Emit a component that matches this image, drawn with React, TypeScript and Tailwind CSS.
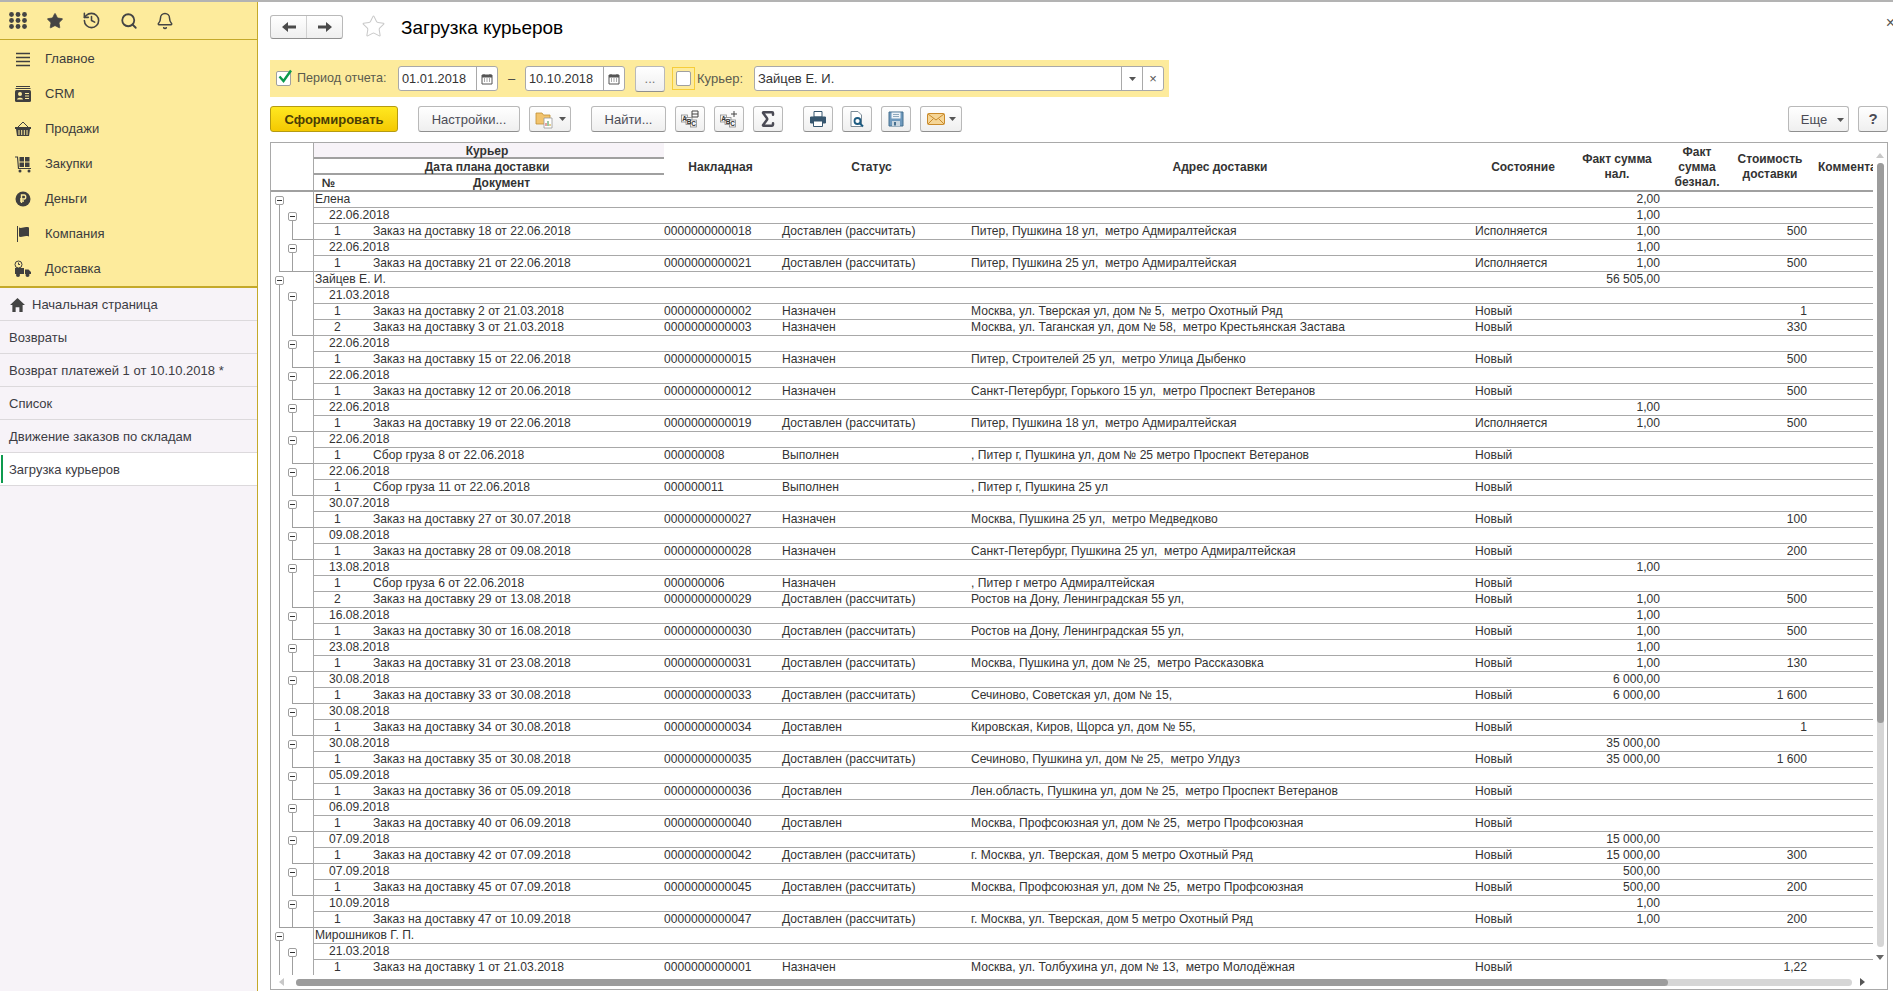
import { Bell, History, Search, Sigma, Star } from 'lucide-react'
import type { ReactNode } from 'react'

type Item = [string, string, string, string, string, string, string?, string?]
type DateGroup = { date: string; cash?: string; items: Item[] }
type Courier = { name: string; total?: string; open?: boolean; dates: DateGroup[] }

const OK = 'Доставлен (рассчитать)'
const SET = 'Назначен'
const DONE = 'Доставлен'

const couriers: Courier[] = [
  {
    name: 'Елена',
    total: '2,00',
    dates: [
      { date: '22.06.2018', cash: '1,00', items: [['1', 'Заказ на доставку 18 от 22.06.2018', '0000000000018', OK, 'Питер, Пушкина 18 ул,  метро Адмиралтейская', 'Исполняется', '1,00', '500']] },
      { date: '22.06.2018', cash: '1,00', items: [['1', 'Заказ на доставку 21 от 22.06.2018', '0000000000021', OK, 'Питер, Пушкина 25 ул,  метро Адмиралтейская', 'Исполняется', '1,00', '500']] },
    ],
  },
  {
    name: 'Зайцев Е. И.',
    total: '56 505,00',
    dates: [
      {
        date: '21.03.2018',
        items: [
          ['1', 'Заказ на доставку 2 от 21.03.2018', '0000000000002', SET, 'Москва, ул. Тверская ул, дом № 5,  метро Охотный Ряд', 'Новый', '', '1'],
          ['2', 'Заказ на доставку 3 от 21.03.2018', '0000000000003', SET, 'Москва, ул. Таганская ул, дом № 58,  метро Крестьянская Застава', 'Новый', '', '330'],
        ],
      },
      { date: '22.06.2018', items: [['1', 'Заказ на доставку 15 от 22.06.2018', '0000000000015', SET, 'Питер, Строителей 25 ул,  метро Улица Дыбенко', 'Новый', '', '500']] },
      { date: '22.06.2018', items: [['1', 'Заказ на доставку 12 от 20.06.2018', '0000000000012', SET, 'Санкт-Петербург, Горького 15 ул,  метро Проспект Ветеранов', 'Новый', '', '500']] },
      { date: '22.06.2018', cash: '1,00', items: [['1', 'Заказ на доставку 19 от 22.06.2018', '0000000000019', OK, 'Питер, Пушкина 18 ул,  метро Адмиралтейская', 'Исполняется', '1,00', '500']] },
      { date: '22.06.2018', items: [['1', 'Сбор груза 8 от 22.06.2018', '000000008', 'Выполнен', ', Питер г, Пушкина ул, дом № 25 метро Проспект Ветеранов', 'Новый']] },
      { date: '22.06.2018', items: [['1', 'Сбор груза 11 от 22.06.2018', '000000011', 'Выполнен', ', Питер г, Пушкина 25 ул', 'Новый']] },
      { date: '30.07.2018', items: [['1', 'Заказ на доставку 27 от 30.07.2018', '0000000000027', SET, 'Москва, Пушкина 25 ул,  метро Медведково', 'Новый', '', '100']] },
      { date: '09.08.2018', items: [['1', 'Заказ на доставку 28 от 09.08.2018', '0000000000028', SET, 'Санкт-Петербург, Пушкина 25 ул,  метро Адмиралтейская', 'Новый', '', '200']] },
      {
        date: '13.08.2018',
        cash: '1,00',
        items: [
          ['1', 'Сбор груза 6 от 22.06.2018', '000000006', SET, ', Питер г метро Адмиралтейская', 'Новый'],
          ['2', 'Заказ на доставку 29 от 13.08.2018', '0000000000029', OK, 'Ростов на Дону, Ленинградская 55 ул,', 'Новый', '1,00', '500'],
        ],
      },
      { date: '16.08.2018', cash: '1,00', items: [['1', 'Заказ на доставку 30 от 16.08.2018', '0000000000030', OK, 'Ростов на Дону, Ленинградская 55 ул,', 'Новый', '1,00', '500']] },
      { date: '23.08.2018', cash: '1,00', items: [['1', 'Заказ на доставку 31 от 23.08.2018', '0000000000031', OK, 'Москва, Пушкина ул, дом № 25,  метро Рассказовка', 'Новый', '1,00', '130']] },
      { date: '30.08.2018', cash: '6 000,00', items: [['1', 'Заказ на доставку 33 от 30.08.2018', '0000000000033', OK, 'Сечиново, Советская ул, дом № 15,', 'Новый', '6 000,00', '1 600']] },
      { date: '30.08.2018', items: [['1', 'Заказ на доставку 34 от 30.08.2018', '0000000000034', DONE, 'Кировская, Киров, Щорса ул, дом № 55,', 'Новый', '', '1']] },
      { date: '30.08.2018', cash: '35 000,00', items: [['1', 'Заказ на доставку 35 от 30.08.2018', '0000000000035', OK, 'Сечиново, Пушкина ул, дом № 25,  метро Улдуз', 'Новый', '35 000,00', '1 600']] },
      { date: '05.09.2018', items: [['1', 'Заказ на доставку 36 от 05.09.2018', '0000000000036', DONE, 'Лен.область, Пушкина ул, дом № 25,  метро Проспект Ветеранов', 'Новый']] },
      { date: '06.09.2018', items: [['1', 'Заказ на доставку 40 от 06.09.2018', '0000000000040', DONE, 'Москва, Профсоюзная ул, дом № 25,  метро Профсоюзная', 'Новый']] },
      { date: '07.09.2018', cash: '15 000,00', items: [['1', 'Заказ на доставку 42 от 07.09.2018', '0000000000042', OK, 'г. Москва, ул. Тверская, дом 5 метро Охотный Ряд', 'Новый', '15 000,00', '300']] },
      { date: '07.09.2018', cash: '500,00', items: [['1', 'Заказ на доставку 45 от 07.09.2018', '0000000000045', OK, 'Москва, Профсоюзная ул, дом № 25,  метро Профсоюзная', 'Новый', '500,00', '200']] },
      { date: '10.09.2018', cash: '1,00', items: [['1', 'Заказ на доставку 47 от 10.09.2018', '0000000000047', OK, 'г. Москва, ул. Тверская, дом 5 метро Охотный Ряд', 'Новый', '1,00', '200']] },
    ],
  },
  {
    name: 'Мирошников Г. П.',
    open: true,
    dates: [{ date: '21.03.2018', items: [['1', 'Заказ на доставку 1 от 21.03.2018', '0000000000001', SET, 'Москва, ул. Толбухина ул, дом № 13,  метро Молодёжная', 'Новый', '', '1,22']] }],
  },
]

const cols = 'grid grid-cols-[350px_117px_189px_504px_98px_90px_70px_76px_66px]'
const LINE = '#9f9f9f'

// дерево слева от строки отчета
function TreeCell({ kind, inDate, endDate, endCourier }: { kind: 'c' | 'd' | 'i'; inDate?: boolean; endDate?: boolean; endCourier?: boolean }) {
  const box = (x: number) => (
    <>
      <rect x={x + 0.5} y="4.5" width="8" height="8" rx="1.5" fill="#fff" stroke={LINE} />
      <path d={`M${x + 2} 8.5H${x + 7}`} stroke="#333" />
    </>
  )
  return (
    <svg width="42" height="16" className="shrink-0">
      {kind === 'c' ? <path d="M8.5 13V16" stroke={LINE} /> : <path d="M8.5 0V16" stroke={LINE} />}
      {kind === 'd' && <path d="M21.5 13V16" stroke={LINE} />}
      {kind === 'i' && inDate && <path d="M21.5 0V16" stroke={LINE} />}
      {endDate && <path d="M21 15.5H42" stroke={LINE} />}
      {endCourier && <path d="M8 15.5H42" stroke={LINE} />}
      {kind === 'c' && box(4)}
      {kind === 'd' && box(17)}
    </svg>
  )
}

function Cells({ first, inv, status, addr, state, cash, cost }: { first: ReactNode; inv?: string; status?: string; addr?: string; state?: string; cash?: string; cost?: string }) {
  return (
    <div className={`${cols} h-4 flex-1 border-b border-l border-[#a8a8a8] text-[12.1px] leading-[15px] text-[#333] whitespace-pre`}>
      <div className="overflow-hidden">{first}</div>
      <div>{inv}</div>
      <div className="pl-px">{status}</div>
      <div className="pl-px">{addr}</div>
      <div className="pl-px">{state}</div>
      <div className="pr-[2px] text-right">{cash}</div>
      <div />
      <div className="pr-[1px] text-right">{cost}</div>
      <div />
    </div>
  )
}

function Rows() {
  const rows: ReactNode[] = []
  couriers.forEach((c, ci) => {
    rows.push(
      <div key={`c${ci}`} className="flex h-4">
        <TreeCell kind="c" />
        <Cells first={<span className="pl-[1px]">{c.name}</span>} cash={c.total} />
      </div>,
    )
    c.dates.forEach((d, di) => {
      rows.push(
        <div key={`d${ci}-${di}`} className="flex h-4">
          <TreeCell kind="d" />
          <Cells first={<span className="pl-[15px]">{d.date}</span>} cash={d.cash} />
        </div>,
      )
      d.items.forEach((it, ii) => {
        const lastInDate = ii === d.items.length - 1
        const lastDate = di === c.dates.length - 1
        rows.push(
          <div key={`i${ci}-${di}-${ii}`} className="flex h-4">
            <TreeCell kind="i" inDate endDate={lastInDate && !c.open} endCourier={lastInDate && lastDate && !c.open} />
            <Cells
              first={
                <div className="flex">
                  <span className="w-[59px] pl-[20px]">{it[0]}</span>
                  <span>{it[1]}</span>
                </div>
              }
              inv={it[2]}
              status={it[3]}
              addr={it[4]}
              state={it[5]}
              cash={it[6]}
              cost={it[7]}
            />
          </div>,
        )
      })
    })
  })
  return <>{rows}</>
}

function ReportHeader() {
  const th = 'flex items-center justify-center text-center text-[12px] leading-[15px] font-bold text-[#333]'
  return (
    <div className="flex h-[49px] border-b-[2px] border-[#a0a0a0]">
      <div className="h-[47px] w-[43px] shrink-0 border-r border-[#a8a8a8]" />
      <div className={cols}>
        <div className="flex flex-col">
          <div className={`${th} h-4 border-b-[2px] border-[#a0a0a0] bg-[#f7f3f8] pr-1 pt-[2px]`}>Курьер</div>
          <div className={`${th} h-4 border-b-[2px] border-[#a0a0a0] pr-1 pt-[2px]`}>Дата плана доставки</div>
          <div className="flex h-[15px] pt-px">
            <div className={`${th} w-[29px]`}>№</div>
            <div className={`${th} flex-1 pr-1`}>Документ</div>
          </div>
        </div>
        <div className={`${th} pr-1 pt-[2px]`}>Накладная</div>
        <div className={`${th} pr-[8px] pt-[2px]`}>Статус</div>
        <div className={`${th} pr-1 pt-[2px]`}>Адрес доставки</div>
        <div className={`${th} pt-[2px]`}>Состояние</div>
        <div className={th}>
          Факт сумма
          <br />
          нал.
        </div>
        <div className={`${th} pt-[2px]`}>
          Факт
          <br />
          сумма
          <br />
          безнал.
        </div>
        <div className={th}>
          Стоимость
          <br />
          доставки
        </div>
        <div className={`${th} justify-start overflow-hidden pl-[10px] pt-[2px] whitespace-nowrap`}>Комментарий</div>
      </div>
    </div>
  )
}

function Btn({ children, className = '', primary }: { children: ReactNode; className?: string; primary?: boolean }) {
  const look = primary
    ? 'border-[#b59b12] bg-gradient-to-b from-[#ffe81f] to-[#f4c900] font-bold text-[#4a3d05]'
    : 'border-[#b9b9b9] border-b-[#8f8f8f] bg-gradient-to-b from-white to-[#efefef] text-[#4b4b55]'
  return (
    <button type="button" className={`flex h-[26px] items-center justify-center rounded-[3px] border text-[13px] ${look} ${className}`}>
      {children}
    </button>
  )
}

const Caret = () => (
  <svg width="7" height="4" viewBox="0 0 7 4" className="shrink-0">
    <path d="M0 0H7L3.5 4Z" fill="#555" />
  </svg>
)

const Calendar = () => (
  <svg width="12" height="12" viewBox="0 0 12 12" className="shrink-0">
    <path d="M1 2H11V11H1Z" fill="#fff" stroke="#555" />
    <path d="M1 2H11V4.5H1Z" fill="#555" />
    <path d="M3 1V3M9 1V3" stroke="#555" />
    <path d="M3 6H4M5.5 6H6.5M8 6H9M3 8H4M5.5 8H6.5M8 8H9" stroke="#555" />
  </svg>
)

function DateField({ value }: { value: string }) {
  return (
    <div className="flex h-[25px] w-[100px] items-center rounded-[3px] border border-[#a9a9a9] bg-white">
      <span className="flex-1 pl-[3px] pt-px text-[12.8px] text-[#333]">{value}</span>
      <span className="flex h-full w-[21px] items-center justify-center border-l border-[#a9a9a9]">
        <Calendar />
      </span>
    </div>
  )
}

const AbcIcon = ({ plus }: { plus?: boolean }) => (
  <svg width="20" height="20" viewBox="0 0 20 20">
    <g fill="#f7f7f7" stroke="#8a8a8a" strokeWidth="0.8">
      <rect x="1.5" y="6" width="6" height="7" />
      <rect x="6" y="8.5" width="6" height="7" />
      <rect x="10.5" y="11" width="6" height="7" />
    </g>
    <g fontSize="6.5" fontFamily="'Liberation Sans', sans-serif" fontWeight="700" fill="#333" textAnchor="middle">
      <text x="4.5" y="12">A</text>
      <text x="9" y="14.5">B</text>
      <text x="13.5" y="17">C</text>
    </g>
    <path d={plus ? 'M12 5H18M15 2V8' : 'M12 2H18V8H12ZM12 5H18'} stroke="#444" fill="none" />
  </svg>
)

const FolderIcon = () => (
  <svg width="20" height="20" viewBox="0 0 20 20">
    <path d="M1 4H7L8.5 6H15V15H1Z" fill="#f2c46e" stroke="#c08f32" strokeWidth="0.8" />
    <path d="M9 9H17V19H9Z" fill="#fff" stroke="#9a9a9a" strokeWidth="0.8" />
    <path d="M11 17V14" stroke="#c44" />
    <path d="M13 17V12" stroke="#3a8f4a" />
    <path d="M15 17V15" stroke="#c9a227" />
  </svg>
)

const PrintIcon = () => (
  <svg width="18" height="18" viewBox="0 0 18 18">
    <path d="M5 1.5H13V7H5Z" fill="#fff" stroke="#36566f" />
    <path d="M1.5 7H16.5V13H13.5V11H4.5V13H1.5Z" fill="#36566f" stroke="#36566f" />
    <path d="M4.5 11H13.5V16.5H4.5Z" fill="#fff" stroke="#36566f" />
  </svg>
)

const PreviewIcon = () => (
  <svg width="18" height="18" viewBox="0 0 18 18">
    <path d="M3 1.5H10L13.5 5V16.5H3Z" fill="#fff" stroke="#7b8b97" />
    <circle cx="9.5" cy="11" r="3" fill="#fff" stroke="#1d5c82" strokeWidth="1.8" />
    <path d="M11.5 13L15 16.5" stroke="#1d5c82" strokeWidth="2" />
  </svg>
)

const SaveIcon = () => (
  <svg width="18" height="18" viewBox="0 0 18 18">
    <path d="M2 2H16V16H2Z" fill="#6e99bd" stroke="#47708f" />
    <path d="M4.5 2.5H13.5V8.5H4.5Z" fill="#eef3f7" />
    <path d="M6 4.5H12M6 6.5H12" stroke="#8fa9bd" />
    <path d="M5 11H13V16H5Z" fill="#c9d6e0" />
    <path d="M7 12H9V15.5H7Z" fill="#47708f" />
  </svg>
)

const MailIcon = () => (
  <svg width="18" height="14" viewBox="0 0 18 14">
    <rect x="0.5" y="1.5" width="17" height="11" rx="1" fill="#f5d596" stroke="#c98a2b" />
    <path d="M1 2L9 8L17 2M1 12L6.5 6.5M17 12L11.5 6.5" fill="none" stroke="#c98a2b" />
  </svg>
)

function NavArrow({ right }: { right?: boolean }) {
  return (
    <svg width="14" height="10" viewBox="0 0 14 10" fill="#4a4a4a" className={right ? '-scale-x-100' : ''}>
      <path d="M0 5L6 0V3.5H14V6.5H6V10Z" />
    </svg>
  )
}

function NavIcon({ name }: { name: string }) {
  const c = '#3f3f3f'
  switch (name) {
    case 'main':
      return (
        <svg width="16" height="16" viewBox="0 0 16 16">
          <path d="M1 2.5H15M1 6.5H15M1 10.5H15M1 14.5H15" stroke={c} strokeWidth="1.6" />
        </svg>
      )
    case 'crm':
      return (
        <svg width="18" height="18" viewBox="0 0 18 18">
          <path d="M2 1.5H16M1.5 3.5H16.5" stroke={c} />
          <rect x="1" y="5" width="16" height="12" rx="1.5" fill={c} />
          <circle cx="6" cy="9" r="2" fill="#fdeb9c" />
          <path d="M3 14.5C3 12 9 12 9 14.5Z" fill="#fdeb9c" />
          <path d="M11 8.5H15M11 11H15M11 13.5H15" stroke="#fdeb9c" />
        </svg>
      )
    case 'sales':
      return (
        <svg width="18" height="18" viewBox="0 0 18 18">
          <path d="M4 7L9 2L14 7" fill="none" stroke={c} />
          <path d="M1 7H17V9H16L15 16H3L2 9H1Z" fill={c} />
          <path d="M5 10V15M7.7 10V15M10.3 10V15M13 10V15" stroke="#fdeb9c" />
        </svg>
      )
    case 'buy':
      return (
        <svg width="18" height="18" viewBox="0 0 18 18">
          <path d="M1 2H3.5L4.5 13.5H17" fill="none" stroke={c} strokeWidth="1.2" />
          <path d="M5.5 2H10V6.5H5.5ZM11 2H15.5V6.5H11ZM5.5 7.5H10V12H5.5ZM11 7.5H15.5V12H11Z" fill={c} />
          <circle cx="6" cy="16" r="1.5" fill={c} />
          <circle cx="15" cy="16" r="1.5" fill={c} />
        </svg>
      )
    case 'money':
      return (
        <svg width="16" height="16" viewBox="0 0 16 16">
          <circle cx="8" cy="8" r="7.5" fill={c} />
          <path d="M6.5 12V4H9.2C11.2 4 11.2 8 9.2 8H5M5 10H9" fill="none" stroke="#fdeb9c" strokeWidth="1.4" />
        </svg>
      )
    case 'company':
      return (
        <svg width="16" height="18" viewBox="0 0 16 18">
          <path d="M2.5 1V17" stroke={c} />
          <path d="M4 2.5C7 4 9 1 14 2.5V11.5C9 10 7 13 4 11.5Z" fill={c} />
        </svg>
      )
    default:
      return (
        <svg width="18" height="18" viewBox="0 0 18 18">
          <path d="M1 8H10V14H1ZM11 9.5H14.5L17 12V14H11Z" fill={c} />
          <circle cx="4.5" cy="4.5" r="3.5" fill="#fdeb9c" stroke={c} />
          <path d="M4.5 2.5V4.5H6" fill="none" stroke={c} />
          <circle cx="4" cy="15" r="2" fill={c} />
          <circle cx="13.5" cy="15" r="2" fill={c} />
        </svg>
      )
  }
}

const nav = [
  ['main', 'Главное'],
  ['crm', 'CRM'],
  ['sales', 'Продажи'],
  ['buy', 'Закупки'],
  ['money', 'Деньги'],
  ['company', 'Компания'],
  ['delivery', 'Доставка'],
]

const tabs = ['Возвраты', 'Возврат платежей 1 от 10.10.2018 *', 'Список', 'Движение заказов по складам']

function Sidebar() {
  return (
    <aside className="flex w-[258px] shrink-0 flex-col border-r border-[#c4a92a] bg-[#f7f3f8]">
      <div className="flex h-[38px] items-center gap-[18.5px] border-b border-[#c4a92a] bg-[#fdeb9c] pl-[9px] text-[#444]">
        <svg width="18" height="17" viewBox="0 0 18 17" fill="#444">
          {[2.5, 9, 15.5].map((x) =>
            [2.5, 8.5, 14.5].map((y) => <circle key={`${x}-${y}`} cx={x} cy={y} r="2.4" />),
          )}
        </svg>
        <Star size={18} fill="#444" strokeWidth={1} />
        <History size={19} strokeWidth={2} />
        <Search size={18} strokeWidth={2.4} />
        <Bell size={18} strokeWidth={2} />
      </div>
      <nav className="flex flex-col border-b-[2px] border-[#c4a92a] bg-[#fdeb9c] pb-[1px]">
        {nav.map(([id, label]) => (
          <div key={id} className="flex h-[35px] items-center pt-[2px] text-[13px] text-[#3c3c3c]">
            <span className="flex w-[45px] justify-center pl-[1px]">
              <NavIcon name={id} />
            </span>
            {label}
          </div>
        ))}
      </nav>
      <div className="flex h-[33px] items-center gap-[7px] border-b border-[#dcd9dc] pl-[10px] pt-px text-[13px] text-[#3c3c44]">
        <svg width="15" height="14" viewBox="0 0 16 15" fill="#444" className="shrink-0">
          <path d="M8 0L16 7.5H13.5V15H10V10H6V15H2.5V7.5H0Z" />
        </svg>
        Начальная страница
      </div>
      {tabs.map((t) => (
        <div key={t} className="flex h-[33px] items-center border-b border-[#dcd9dc] pl-[9px] pt-px text-[13px] text-[#3c3c44]">
          {t}
        </div>
      ))}
      <div className="flex h-[33px] items-center border-b border-[#dcd9dc] bg-white py-[2px] pl-[1px] text-[13px] text-[#3c3c44]">
        <span className="mr-[6px] h-full w-[2px] bg-[#0d9a4e]" />
        <span className="pt-[2px]">Загрузка курьеров</span>
      </div>
    </aside>
  )
}

function Checkbox({ checked }: { checked?: boolean }) {
  return (
    <span className="relative flex h-[15px] w-[15px] shrink-0 rounded-[2px] border border-[#a0a0a0] bg-white">
      {checked && (
        <svg width="17" height="16" viewBox="0 0 17 16" className="absolute -top-[3px] left-0">
          <path d="M2.5 7.5L6.5 12L14 1.5" fill="none" stroke="#0c9a4c" strokeWidth="2.4" />
        </svg>
      )}
    </span>
  )
}

function FilterBar() {
  return (
    <div className="mt-[22px] flex h-[37px] w-[899px] items-center bg-[#fdeb9c] pl-[6px] text-[13px] text-[#5b5b4f]">
      <Checkbox checked />
      <span className="ml-[6px] w-[101px] text-[12.6px]">Период отчета:</span>
      <DateField value="01.01.2018" />
      <span className="w-[27px] text-center text-[#444]">–</span>
      <DateField value="10.10.2018" />
      <Btn className="ml-[10px] w-[30px] text-[#777]">...</Btn>
      <span className="ml-[7px] flex h-[23px] w-[23px] items-center justify-center border border-[#f6cd3a]">
        <Checkbox />
      </span>
      <span className="ml-[2px] w-[57px]">Курьер:</span>
      <div className="flex h-[25px] w-[410px] items-center rounded-[3px] border border-[#a9a9a9] bg-white text-[#333]">
        <span className="flex-1 pl-[3px]">Зайцев Е. И.</span>
        <span className="flex h-full w-[21px] items-center justify-center border-l border-[#a9a9a9]">
          <Caret />
        </span>
        <span className="flex h-full w-[21px] items-center justify-center border-l border-[#a9a9a9] text-[#555]">×</span>
      </div>
    </div>
  )
}

function Toolbar() {
  return (
    <div className="mt-[9px] flex h-[26px] items-center">
      <Btn primary className="w-[128px] pt-px">Сформировать</Btn>
      <Btn className="ml-[20px] w-[102px] pt-px">Настройки...</Btn>
      <Btn className="ml-[9px] w-[42px] gap-1">
        <FolderIcon />
        <Caret />
      </Btn>
      <Btn className="ml-[20px] w-[75px] pt-px">Найти...</Btn>
      <Btn className="ml-[9px] w-[30px]">
        <AbcIcon />
      </Btn>
      <Btn className="ml-[9px] w-[30px]">
        <AbcIcon plus />
      </Btn>
      <Btn className="ml-[9px] w-[30px] text-[#2d4a63]">
        <Sigma size={20} strokeWidth={3} />
      </Btn>
      <Btn className="ml-[20px] w-[30px]">
        <PrintIcon />
      </Btn>
      <Btn className="ml-[9px] w-[30px]">
        <PreviewIcon />
      </Btn>
      <Btn className="ml-[9px] w-[30px]">
        <SaveIcon />
      </Btn>
      <Btn className="ml-[9px] w-[42px] gap-1">
        <MailIcon />
        <Caret />
      </Btn>
      <Btn className="ml-auto w-[61px] gap-[10px] pl-[8px] pt-px">
        Еще
        <Caret />
      </Btn>
      <Btn className="ml-[9px] w-[30px] font-bold">
        <span className="text-[15px]">?</span>
      </Btn>
    </div>
  )
}

function VScroll() {
  return (
    <div className="flex w-[14px] shrink-0 flex-col items-center pt-[10px]">
      <span className="h-0 w-0 border-x-[4px] border-b-[5px] border-x-transparent border-b-[#c8c8c8]" />
      <div className="mt-[5px] flex h-[784px] w-[7px] flex-col rounded-full bg-[#d6d6d6]">
        <div className="h-[560px] rounded-full bg-[#9c9c9c]" />
      </div>
      <span className="mt-[8px] h-0 w-0 border-x-[4px] border-t-[5px] border-x-transparent border-t-[#666]" />
    </div>
  )
}

function HScroll() {
  return (
    <div className="flex h-[14px] items-center pl-[8px] pr-[22px]">
      <span className="h-0 w-0 border-y-[4px] border-r-[5px] border-y-transparent border-r-[#c8c8c8]" />
      <div className="ml-[12px] flex h-[7px] flex-1 rounded-full bg-[#d6d6d6]">
        <div className="w-[1372px] rounded-full bg-[#9c9c9c]" />
      </div>
      <span className="ml-[8px] h-0 w-0 border-y-[4px] border-l-[5px] border-y-transparent border-l-[#555]" />
    </div>
  )
}

export default function App() {
  return (
    <div className="flex h-[991px] w-[1893px] flex-col overflow-hidden bg-white font-['Liberation_Sans',Arial,sans-serif]">
      <div className="h-[2px] shrink-0 bg-[#b3b3b3]" />
      <div className="flex min-h-0 flex-1">
        <Sidebar />
        <main className="relative flex min-w-0 flex-1 flex-col pl-[12px] pr-[5px]">
          <span className="absolute -right-[2px] top-[13px] text-[16px] leading-4 text-[#555]">×</span>
          <div className="mt-[13px] flex h-[23px] items-center">
            <div className="flex h-[24px] w-[73px] rounded-[3px] border border-[#b9b9b9] border-b-[#8f8f8f] bg-gradient-to-b from-white to-[#efefef]">
              <span className="flex flex-1 items-center justify-center border-r border-[#d0d0d0]">
                <NavArrow />
              </span>
              <span className="flex flex-1 items-center justify-center">
                <NavArrow right />
              </span>
            </div>
            <Star size={25} strokeWidth={1} className="ml-[18px] text-[#c9c9c9]" />
            <h1 className="ml-[15px] pt-[3px] text-[19px] font-normal text-black">Загрузка курьеров</h1>
          </div>
          <FilterBar />
          <Toolbar />
          <div className="mb-[1px] mt-[10px] flex min-h-0 flex-1 flex-col overflow-hidden border border-[#a9a9a9]">
            <div className="flex min-h-0 flex-1">
              <div className="min-w-0 flex-1 overflow-hidden">
                <ReportHeader />
                <Rows />
              </div>
              <VScroll />
            </div>
            <HScroll />
          </div>
        </main>
      </div>
    </div>
  )
}
